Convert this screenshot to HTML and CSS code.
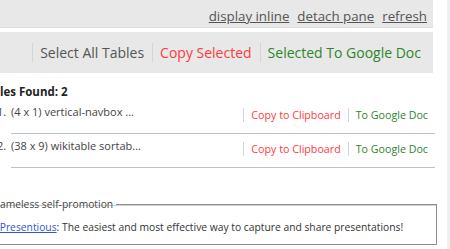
FILE: index.html
```html
<!DOCTYPE html>
<html lang="en">

<head>
    <meta charset="UTF-8">
    <title>Table Capture</title>
    <link rel="stylesheet" href="styles.css">
</head>

<body>
    <div class="pagina">
        <div class="topo">
            <a href="#">display inline</a>
            <a href="#">detach pane</a>
            <a href="#">refresh</a>
        </div>
        <div class="barra">
            <span class="acao">Select All Tables</span>
            <span class="acao vermelho">Copy Selected</span>
            <span class="acao verde">Selected To Google Doc</span>
        </div>
        <p class="total">Tables Found: 2</p>
        <ol class="lista">
            <li>
                <span class="nome">(4 x 1) vertical-navbox ...</span>
                <span class="botoes">
                    <span class="botao vermelho">Copy to Clipboard</span>
                    <span class="botao verde">To Google Doc</span>
                </span>
            </li>
            <li>
                <span class="nome">(38 x 9) wikitable sortab...</span>
                <span class="botoes">
                    <span class="botao vermelho">Copy to Clipboard</span>
                    <span class="botao verde">To Google Doc</span>
                </span>
            </li>
        </ol>
        <fieldset class="promo">
            <legend>Shameless self-promotion</legend>
            <a href="#">Try Presentious</a>: The easiest and most effective way to capture and share presentations!
        </fieldset>
    </div>
    <div class="rolagem"></div>
</body>

</html>
```

FILE: styles.css
```css
* {
    margin: 0;
    padding: 0;
}

body {
    font-family: "Open Sans", "Noto Sans", sans-serif;
    color: #333;
    background: #fff;
    overflow: hidden;
}

.pagina {
    width: 474px;
    margin-left: -37px;
}

.topo {
    height: 27px;
    margin-right: 4px;
    background-color: #e8e8e8;
    border-bottom: 1px solid #dcdcdc;
    display: flex;
    justify-content: flex-end;
    gap: 8px;
    padding-right: 6px;
    font-size: 13.3px;
    line-height: 32px;
}

.topo a {
    color: #555;
}

.barra {
    margin: 4px 4px 0 0;
    height: 41px;
    background-color: #e8e8e8;
    display: flex;
    justify-content: flex-end;
    align-items: center;
    padding-right: 4px;
    font-size: 14px;
}

.acao {
    color: #555;
    border-left: 1px solid #d6d6d6;
    padding: 0 8px 0 7px;
    line-height: 19px;
}

.vermelho {
    color: #ff3b3b;
}

.verde {
    color: #2d862d;
}

.total {
    font-weight: bold;
    font-size: 11.5px;
    line-height: 17px;
    margin: 10px 0 0 16px;
    color: #222;
}

.lista {
    margin: 0 2px 0 48px;
    font-size: 11px;
    color: #444;
    list-style: none;
    counter-reset: tabela;
}

.lista li {
    display: flex;
    justify-content: space-between;
    border-bottom: 1px solid #b8c4cc;
    height: 33px;
    counter-increment: tabela;
}

.nome {
    margin-top: 4px;
    line-height: 16px;
}

.nome::before {
    content: counter(tabela) ".";
    display: inline-block;
    width: 14px;
    margin-left: -14px;
    color: #444;
}

.botoes {
    display: flex;
    align-items: center;
    height: 18px;
    margin-top: 6px;
    font-size: 10.7px;
}

.botao {
    border-left: 1px solid #d6d6d6;
    padding-left: 7px;
    margin-right: 7px;
}

.promo {
    margin-top: 29px;
    border: 1px solid #8e8e8e;
    box-shadow: inset 1px 1px 0 #d0d0d0;
    padding: 8px 12px 9px 18px;
    font-size: 10.3px;
    line-height: 15px;
    color: #333;
}

.promo legend {
    padding: 0 3px;
    margin-left: 3px;
    color: #444;
}

.promo a {
    color: #3355dd;
}

.rolagem {
    position: absolute;
    top: 0;
    right: 0;
    width: 3px;
    height: 100%;
    background: #f0f0f0;
}
```
